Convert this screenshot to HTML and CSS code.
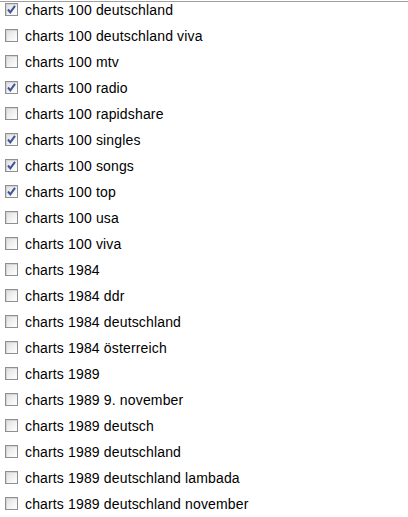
FILE: index.html
```html
<!DOCTYPE html>
<html lang="en">
<head>
    <meta charset="UTF-8">
    <title>Charts</title>
    <link rel="stylesheet" href="styles.css">
</head>
<body>
    <div class="list">
        <label class="row"><span class="box"><svg viewBox="0 0 11 11"><path d="M2 5.5 L4.3 8.3 L9 1.8" /></svg></span>charts 100 deutschland</label>
        <label class="row"><span class="box"></span>charts 100 deutschland viva</label>
        <label class="row"><span class="box"></span>charts 100 mtv</label>
        <label class="row"><span class="box"><svg viewBox="0 0 11 11"><path d="M2 5.5 L4.3 8.3 L9 1.8" /></svg></span>charts 100 radio</label>
        <label class="row"><span class="box"></span>charts 100 rapidshare</label>
        <label class="row"><span class="box"><svg viewBox="0 0 11 11"><path d="M2 5.5 L4.3 8.3 L9 1.8" /></svg></span>charts 100 singles</label>
        <label class="row"><span class="box"><svg viewBox="0 0 11 11"><path d="M2 5.5 L4.3 8.3 L9 1.8" /></svg></span>charts 100 songs</label>
        <label class="row"><span class="box"><svg viewBox="0 0 11 11"><path d="M2 5.5 L4.3 8.3 L9 1.8" /></svg></span>charts 100 top</label>
        <label class="row"><span class="box"></span>charts 100 usa</label>
        <label class="row"><span class="box"></span>charts 100 viva</label>
        <label class="row"><span class="box"></span>charts 1984</label>
        <label class="row"><span class="box"></span>charts 1984 ddr</label>
        <label class="row"><span class="box"></span>charts 1984 deutschland</label>
        <label class="row"><span class="box"></span>charts 1984 österreich</label>
        <label class="row"><span class="box"></span>charts 1989</label>
        <label class="row"><span class="box"></span>charts 1989 9. november</label>
        <label class="row"><span class="box"></span>charts 1989 deutsch</label>
        <label class="row"><span class="box"></span>charts 1989 deutschland</label>
        <label class="row"><span class="box"></span>charts 1989 deutschland lambada</label>
        <label class="row"><span class="box"></span>charts 1989 deutschland november</label>
    </div>
</body>
</html>
```

FILE: styles.css
```css
body {
    margin: 0;
    font-family: "Liberation Sans", Arial, sans-serif;
    font-size: 14px;
    color: #000;
    background: #fff;
}
.list {
    margin-top: 1px;
    border-top: 1px solid #a0a0a0;
    padding-top: 0;
}
.row {
    display: flex;
    align-items: flex-start;
    height: 26px;
    line-height: 16px;
    letter-spacing: 0.15px;
}
.box {
    width: 11px;
    height: 11px;
    margin: 1px 7px 0 5px;
    border: 1px solid #8f8f8f;
    background: linear-gradient(135deg, #dcdcdc 0%, #f0f0f0 50%, #ffffff 100%);
    box-shadow: inset 1px 1px 0 #d4d4d4;
    flex-shrink: 0;
}
.box svg {
    display: block;
    width: 11px;
    height: 11px;
}
.box path {
    fill: none;
    stroke: #3d5596;
    stroke-width: 2;
}
```
